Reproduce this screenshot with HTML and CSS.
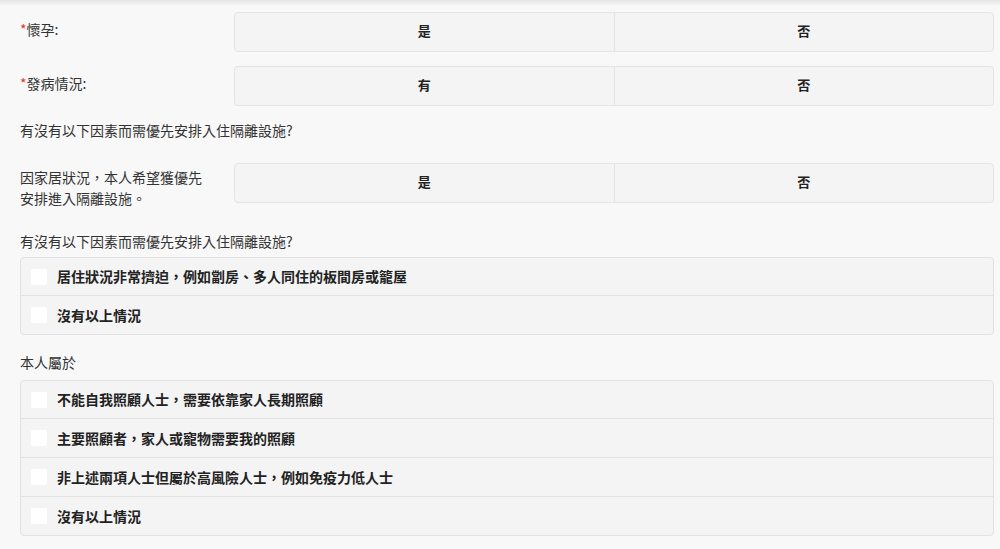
FILE: index.html
```html
<!DOCTYPE html>
<html lang="zh-Hant">
<head>
<meta charset="utf-8">
<link rel="stylesheet" href="styles.css">
</head>
<body>
<div class="top-shade"></div>
<div class="form">
  <div class="field-row">
    <div class="label"><span class="req">*</span>懷孕:</div>
    <div class="btn-group">
      <div class="btn">是</div>
      <div class="btn">否</div>
    </div>
  </div>
  <div class="field-row">
    <div class="label"><span class="req">*</span>發病情況:</div>
    <div class="btn-group">
      <div class="btn">有</div>
      <div class="btn">否</div>
    </div>
  </div>
  <div class="question q1">有沒有以下因素而需優先安排入住隔離設施?</div>
  <div class="field-row row3">
    <div class="label">因家居狀況，本人希望獲優先安排進入隔離設施。</div>
    <div class="btn-group">
      <div class="btn">是</div>
      <div class="btn">否</div>
    </div>
  </div>
  <div class="question q2">有沒有以下因素而需優先安排入住隔離設施?</div>
  <div class="check-list">
    <div class="check-row"><span class="box"></span><span class="opt">居住狀況非常擠迫，例如劏房、多人同住的板間房或籠屋</span></div>
    <div class="check-row"><span class="box"></span><span class="opt">沒有以上情況</span></div>
  </div>
  <div class="question q3">本人屬於</div>
  <div class="check-list">
    <div class="check-row"><span class="box"></span><span class="opt">不能自我照顧人士，需要依靠家人長期照顧</span></div>
    <div class="check-row"><span class="box"></span><span class="opt">主要照顧者，家人或寵物需要我的照顧</span></div>
    <div class="check-row"><span class="box"></span><span class="opt">非上述兩項人士但屬於高風險人士，例如免疫力低人士</span></div>
    <div class="check-row"><span class="box"></span><span class="opt">沒有以上情況</span></div>
  </div>
</div>
</body>
</html>
```

FILE: styles.css
```css
* { box-sizing: border-box; }
html, body {
  margin: 0;
  padding: 0;
  background: #f8f8f8;
}
body {
  font-family: "Noto Sans CJK TC", "Noto Sans", "Liberation Sans", sans-serif;
  font-size: 14px;
  color: #333;
  line-height: 21px;
  position: relative;
}
.top-shade {
  position: absolute;
  left: 0;
  top: 0;
  right: 0;
  height: 6px;
  background: linear-gradient(#e6e6e6, rgba(248,248,248,0));
}
.form {
  padding: 12px 6px 0 20px;
}
.field-row {
  display: flex;
  align-items: flex-start;
  margin-bottom: 14px;
}
.label {
  width: 190px;
  margin-right: 24px;
  padding-top: 7px;
  color: #333;
}
.row3 .label { padding-top: 4px; }
.req { color: #e8352a; }
.btn-group {
  flex: 1;
  display: flex;
  height: 40px;
  border: 1px solid #e4e4e4;
  border-radius: 4px;
  background: #f4f4f4;
}
.btn {
  flex: 1;
  display: flex;
  align-items: center;
  justify-content: center;
  padding-bottom: 3px;
  font-size: 13px;
  font-weight: bold;
  color: #222;
}
.btn + .btn { border-left: 1px solid #e4e4e4; }
.question { color: #333; }
.q1 { margin-bottom: 22px; }
.row3 { margin-bottom: 22px; }
.q2 { margin-bottom: 5px; }
.q3 { margin-top: 17px; margin-bottom: 7px; }
.check-list {
  border: 1px solid #e2e2e2;
  border-radius: 4px;
  background: #f4f4f4;
}
.check-row {
  display: flex;
  align-items: center;
  height: 37px;
  padding-left: 10px;
}
.check-row + .check-row {
  border-top: 1px solid #e2e2e2;
  height: 39px;
}
.box {
  width: 16px;
  height: 16px;
  background: #fff;
  border-radius: 2px;
  margin-right: 10px;
  flex: none;
}
.opt {
  font-weight: bold;
  color: #222;
}
```
